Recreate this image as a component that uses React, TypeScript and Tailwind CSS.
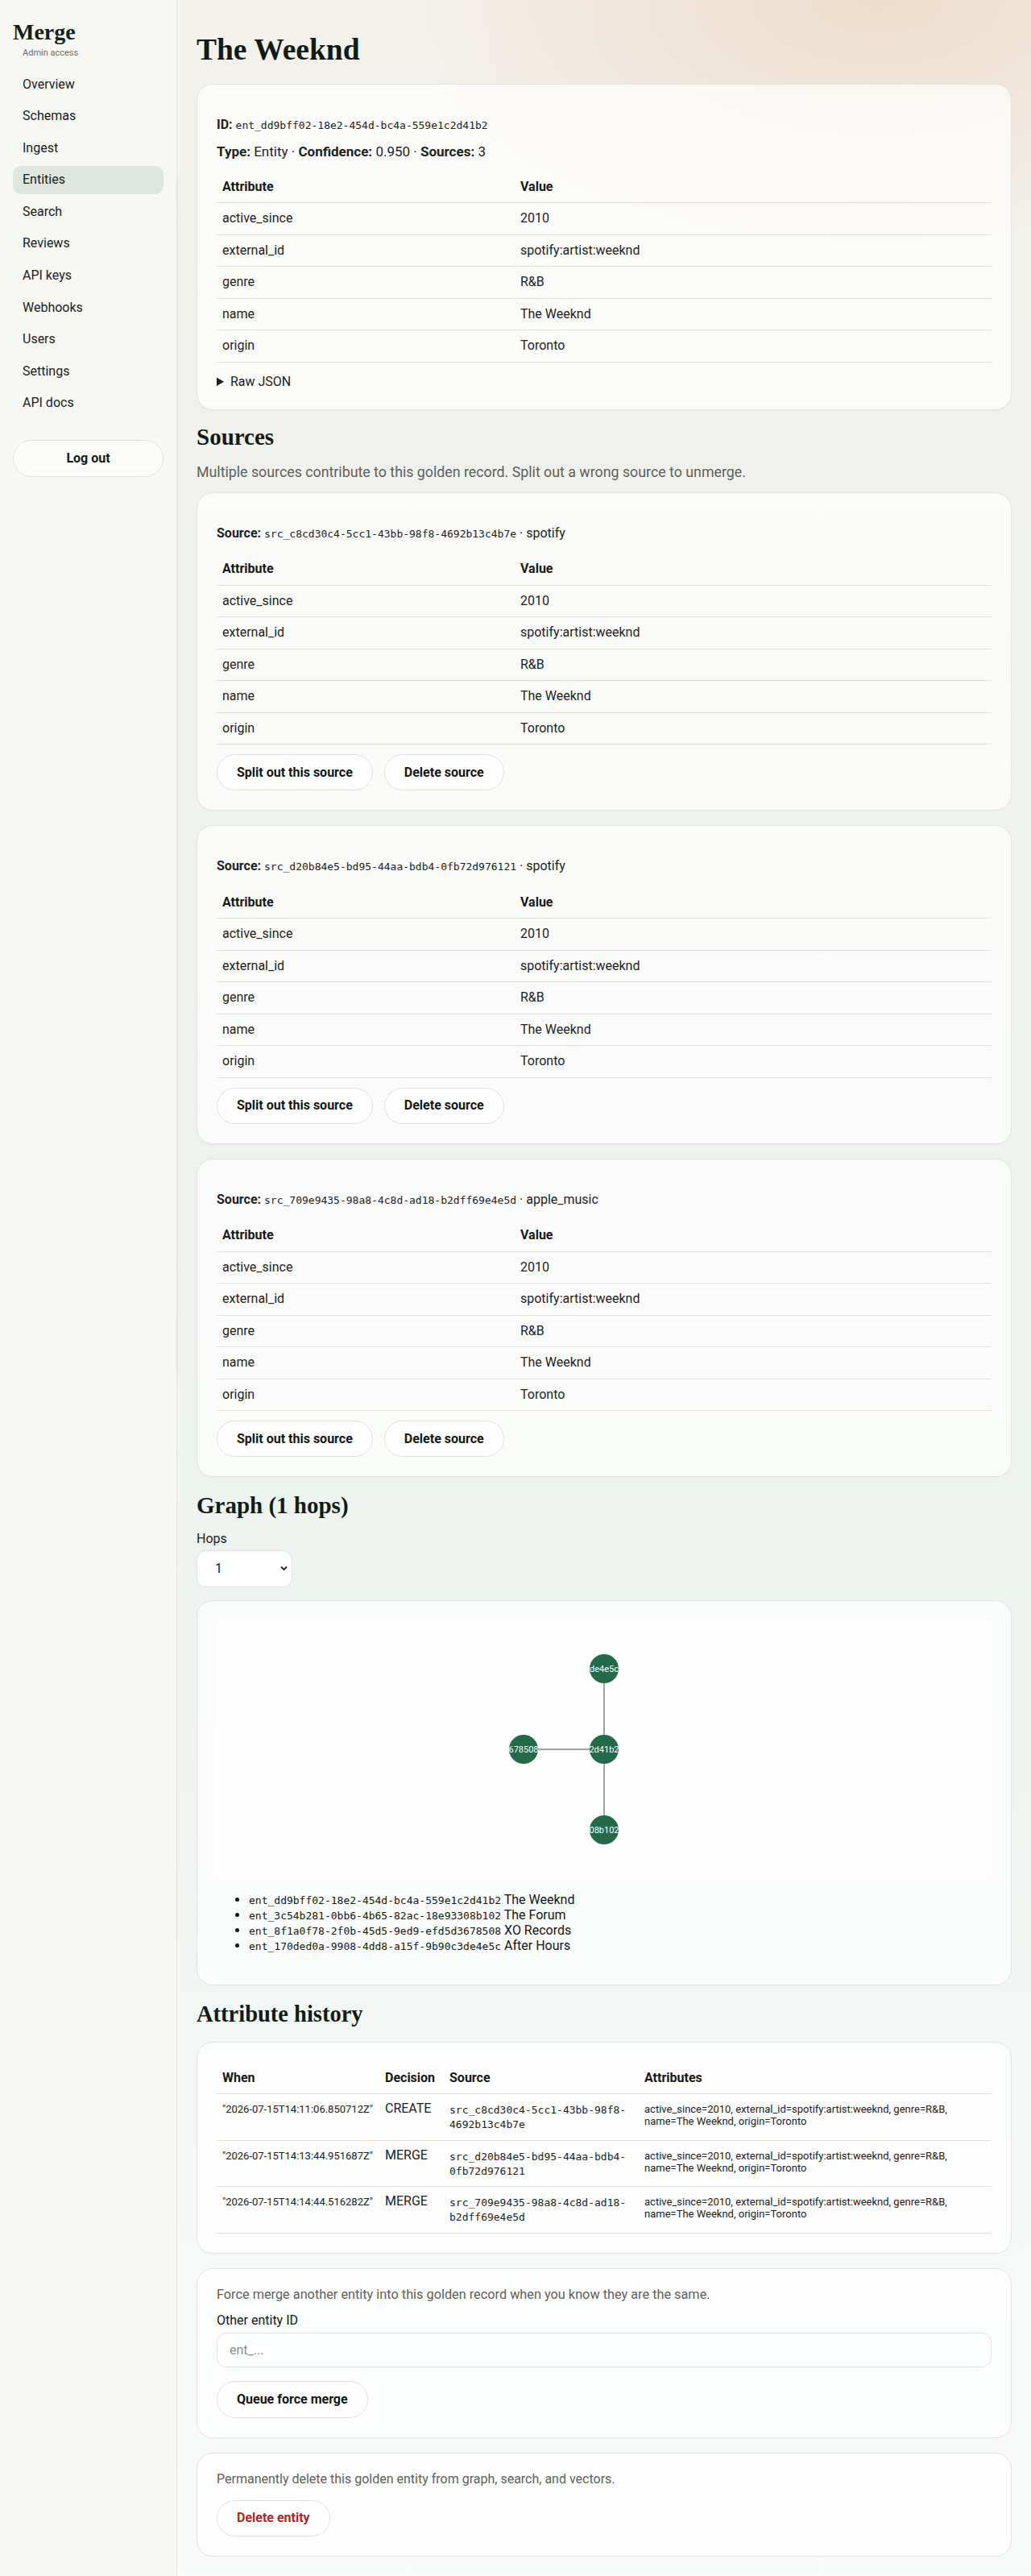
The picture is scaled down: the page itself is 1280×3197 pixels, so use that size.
import React from "react";

const SANS = "[font-family:Roboto,'Liberation_Sans',sans-serif]";
const SERIF = "[font-family:'Liberation_Serif',serif]";
const MONO = "[font-family:'DejaVu_Sans_Mono',monospace]";

const navItems = [
  "Overview",
  "Schemas",
  "Ingest",
  "Entities",
  "Search",
  "Reviews",
  "API keys",
  "Webhooks",
  "Users",
  "Settings",
  "API docs",
];

const attrs: [string, string][] = [
  ["active_since", "2010"],
  ["external_id", "spotify:artist:weeknd"],
  ["genre", "R&B"],
  ["name", "The Weeknd"],
  ["origin", "Toronto"],
];

const sources = [
  { id: "src_c8cd30c4-5cc1-43bb-98f8-4692b13c4b7e", sys: "spotify" },
  { id: "src_d20b84e5-bd95-44aa-bdb4-0fb72d976121", sys: "spotify" },
  { id: "src_709e9435-98a8-4c8d-ad18-b2dff69e4e5d", sys: "apple_music" },
];

const history = [
  {
    when: '"2026-07-15T14:11:06.850712Z"',
    decision: "CREATE",
    src: "src_c8cd30c4-5cc1-43bb-98f8-4692b13c4b7e",
  },
  {
    when: '"2026-07-15T14:13:44.951687Z"',
    decision: "MERGE",
    src: "src_d20b84e5-bd95-44aa-bdb4-0fb72d976121",
  },
  {
    when: '"2026-07-15T14:14:44.516282Z"',
    decision: "MERGE",
    src: "src_709e9435-98a8-4c8d-ad18-b2dff69e4e5d",
  },
];

function Card({ children, className = "" }: { children: React.ReactNode; className?: string }) {
  return (
    <div
      className={
        "rounded-[20px] border border-[#e3e3dd] bg-white/70 px-6 pb-6 shadow-[0_1px_2px_rgba(0,0,0,0.02)] " +
        className
      }
    >
      {children}
    </div>
  );
}

function AttrTable() {
  return (
    <table className="w-full border-collapse table-fixed text-[16px] text-[#1d221e]">
      <thead>
        <tr className="border-b border-[#e1e1db]">
          <th className="w-[370px] h-[39.5px] px-[7px] text-left font-bold text-[#141a15]">Attribute</th>
          <th className="h-[39.5px] px-[7px] text-left font-bold text-[#141a15]">Value</th>
        </tr>
      </thead>
      <tbody>
        {attrs.map(([k, v]) => (
          <tr key={k} className="border-b border-[#e1e1db]">
            <td className="h-[39.5px] px-[7px]">{k}</td>
            <td className="h-[39.5px] px-[7px]">{v}</td>
          </tr>
        ))}
      </tbody>
    </table>
  );
}

function PillButton({ children, className = "" }: { children: React.ReactNode; className?: string }) {
  return (
    <button
      className={
        "rounded-full border border-[#e2e2dc] bg-white/60 px-6 font-bold text-[16px] text-[#121712] " + className
      }
    >
      {children}
    </button>
  );
}

function Graph() {
  const nodes = [
    { x: 481, y: 60, label: "de4e5c" },
    { x: 481, y: 160, label: "2d41b2" },
    { x: 381, y: 160, label: "678508" },
    { x: 481, y: 260, label: "08b102" },
  ];
  return (
    <div className="h-[320px] rounded-[6px] bg-white/60">
      <svg viewBox="0 0 962 320" className="block h-[320px] w-full">
        <line x1={481} y1={60} x2={481} y2={260} stroke="#a4a7a4" strokeWidth={2} />
        <line x1={381} y1={160} x2={481} y2={160} stroke="#a4a7a4" strokeWidth={2} />
        {nodes.map((n) => (
          <g key={n.label}>
            <circle cx={n.x} cy={n.y} r={18} fill="#226a4a" />
            <text
              x={n.x}
              y={n.y + 4}
              textAnchor="middle"
              fontSize={11}
              fill="#ffffff"
              fontFamily="Roboto, 'Liberation Sans', sans-serif"
            >
              {n.label}
            </text>
          </g>
        ))}
      </svg>
    </div>
  );
}

export default function App() {
  return (
    <div className={"flex min-h-[3197px] w-full text-[#1d221e] " + SANS}>
      <aside className="w-[220px] shrink-0 border-r border-[#e4e4de] bg-[#f7f7f3] px-4 pt-6">
        <div className={"text-[28px] leading-[32px] font-bold text-[#132218] " + SERIF}>Merge</div>
        <div className="mt-[3px] pl-3 text-[11px] leading-[14px] text-[#6b6e69]">Admin access</div>
        <nav className="mt-[14px] flex flex-col gap-[4.6px]">
          {navItems.map((item) => (
            <a
              key={item}
              className={
                "flex h-[35px] items-center rounded-[10px] px-3 text-[16px] text-[#1b211c] " +
                (item === "Entities" ? "bg-[#dfe6df]" : "")
              }
            >
              {item}
            </a>
          ))}
        </nav>
        <button className="mt-[28px] h-[46px] w-full rounded-full border border-[#e2e2dc] bg-white/50 text-[16px] font-bold text-[#121712]">
          Log out
        </button>
      </aside>

      <main className="flex-1 px-6 pt-6 pb-[25px] [background-image:radial-gradient(ellipse_620px_320px_at_82%_0%,rgba(237,214,192,0.75),rgba(237,214,192,0)),linear-gradient(180deg,#f3f1ec_0%,#eff1ec_25%,#edf3ee_55%,#f3f7f5_80%,#f8faf9_100%)]">
        <h1 className={"mt-4 text-[37.5px] leading-[44px] font-bold text-[#121c15] " + SERIF}>The Weeknd</h1>

        <Card className="mt-5 pt-6">
          <p className="mt-4 text-[16px] leading-[20px]">
            <span className="font-bold">ID:</span>{" "}
            <span className={"text-[13px] " + MONO}>ent_dd9bff02-18e2-454d-bc4a-559e1c2d41b2</span>
          </p>
          <p className="mt-3 text-[17px] leading-[20px]">
            <span className="font-bold">Type:</span> Entity · <span className="font-bold">Confidence:</span> 0.950 ·{" "}
            <span className="font-bold">Sources:</span> 3
          </p>
          <div className="mt-[14px]">
            <AttrTable />
          </div>
          <details className="mt-[14px] text-[16px] leading-[20px]">
            <summary className="cursor-pointer">Raw JSON</summary>
          </details>
        </Card>

        <h2 className={"mt-[15px] text-[29px] leading-[36px] font-bold text-[#121c15] " + SERIF}>Sources</h2>
        <p className="mt-4 text-[17.8px] leading-[20px] text-[#5d615c]">
          Multiple sources contribute to this golden record. Split out a wrong source to unmerge.
        </p>
        <div className="mt-[15px] flex flex-col gap-[18px]">
          {sources.map((s) => (
            <Card key={s.id} className="pt-6">
              <p className="mt-4 text-[16px] leading-[20px]">
                <span className="font-bold">Source:</span> <span className={"text-[13px] " + MONO}>{s.id}</span> ·{" "}
                {s.sys}
              </p>
              <div className="mt-[14px]">
                <AttrTable />
              </div>
              <div className="mt-[12px] flex gap-[14px]">
                <PillButton className="h-[45px]">Split out this source</PillButton>
                <PillButton className="h-[45px]">Delete source</PillButton>
              </div>
            </Card>
          ))}
        </div>

        <h2 className={"mt-[17px] text-[29px] leading-[36px] font-bold text-[#121c15] " + SERIF}>Graph (1 hops)</h2>
        <div className="mt-[14px] text-[16px] leading-[20px] text-[#1d221e]">Hops</div>
        <div className="relative mt-1 w-[119px]">
          <select className="h-[46px] w-[119px] appearance-none rounded-[12px] border border-[#e2e4e0] bg-white px-[22px] text-[16px] text-[#121712] outline-none">
            <option>1</option>
            <option>2</option>
            <option>3</option>
          </select>
          <svg
            className="pointer-events-none absolute right-[6px] top-[19px]"
            width="9"
            height="7"
            viewBox="0 0 9 7"
          >
            <path d="M1 1.5l3.5 3.5L8 1.5" stroke="#222" strokeWidth="1.8" fill="none" />
          </svg>
        </div>

        <Card className="mt-4 pt-6">
          <Graph />
          <ul className="mt-[18px] mb-[14px] list-disc pl-10 text-[16px] leading-[18px] text-[#121712]">
            <li>
              <span className={"text-[13px] " + MONO}>ent_dd9bff02-18e2-454d-bc4a-559e1c2d41b2</span> The Weeknd
            </li>
            <li>
              <span className={"text-[13px] " + MONO}>ent_3c54b281-0bb6-4b65-82ac-18e93308b102</span> The Forum
            </li>
            <li>
              <span className={"text-[13px] " + MONO}>ent_8f1a0f78-2f0b-45d5-9ed9-efd5d3678508</span> XO Records
            </li>
            <li>
              <span className={"text-[13px] " + MONO}>ent_170ded0a-9908-4dd8-a15f-9b90c3de4e5c</span> After Hours
            </li>
          </ul>
        </Card>

        <h2 className={"mt-[18px] text-[28.5px] leading-[36px] font-bold text-[#121c15] " + SERIF}>
          Attribute history
        </h2>
        <Card className="mt-4 pt-6">
          <table className="w-full table-fixed border-collapse text-[#1d221e]">
            <thead>
              <tr className="border-b border-[#e1e1db]">
                <th className="w-[202px] h-[39.5px] px-[7px] text-left text-[16px] font-bold text-[#141a15]">When</th>
                <th className="w-[80px] h-[39.5px] px-[7px] text-left text-[16px] font-bold text-[#141a15]">Decision</th>
                <th className="w-[242px] h-[39.5px] px-[7px] text-left text-[16px] font-bold text-[#141a15]">Source</th>
                <th className="h-[39.5px] px-[7px] text-left text-[16px] font-bold text-[#141a15]">Attributes</th>
              </tr>
            </thead>
            <tbody>
              {history.map((h) => (
                <tr key={h.when} className="border-b border-[#e1e1db]">
                  <td className="px-[7px] pt-[11px] pb-[9.5px] align-top text-[13px] leading-[15px]">{h.when}</td>
                  <td className="px-[7px] pt-[9px] pb-[9.5px] align-top text-[16px] leading-[18px]">{h.decision}</td>
                  <td className={"px-[7px] pt-[11px] pb-[9.5px] align-top text-[13px] leading-[18px] " + MONO}>
                    {h.src}
                  </td>
                  <td className="px-[7px] pt-[11px] pb-[9.5px] align-top text-[13px] leading-[15px]">
                    active_since=2010, external_id=spotify:artist:weeknd, genre=R&amp;B, name=The Weeknd,
                    origin=Toronto
                  </td>
                </tr>
              ))}
            </tbody>
          </table>
        </Card>

        <Card className="mt-[18px] pt-[22px]">
          <p className="text-[16.3px] leading-[20px] text-[#5d615c]">
            Force merge another entity into this golden record when you know they are the same.
          </p>
          <div className="mt-[12px] text-[16px] leading-[20px] text-[#121712]">Other entity ID</div>
          <input
            placeholder="ent_..."
            className="mt-[5px] h-[43px] w-full rounded-[12px] border border-[#e2e4e0] bg-white/80 px-[15px] text-[16px] outline-none placeholder:text-[#8a8d89]"
          />
          <PillButton className="mt-[17px] h-[46px]">Queue force merge</PillButton>
        </Card>

        <Card className="mt-[18px] pt-[22px]">
          <p className="text-[16px] leading-[20px] text-[#5d615c]">
            Permanently delete this golden entity from graph, search, and vectors.
          </p>
          <PillButton className="mt-4 h-[45px] !text-[#b3261e]">Delete entity</PillButton>
        </Card>
      </main>
    </div>
  );
}
